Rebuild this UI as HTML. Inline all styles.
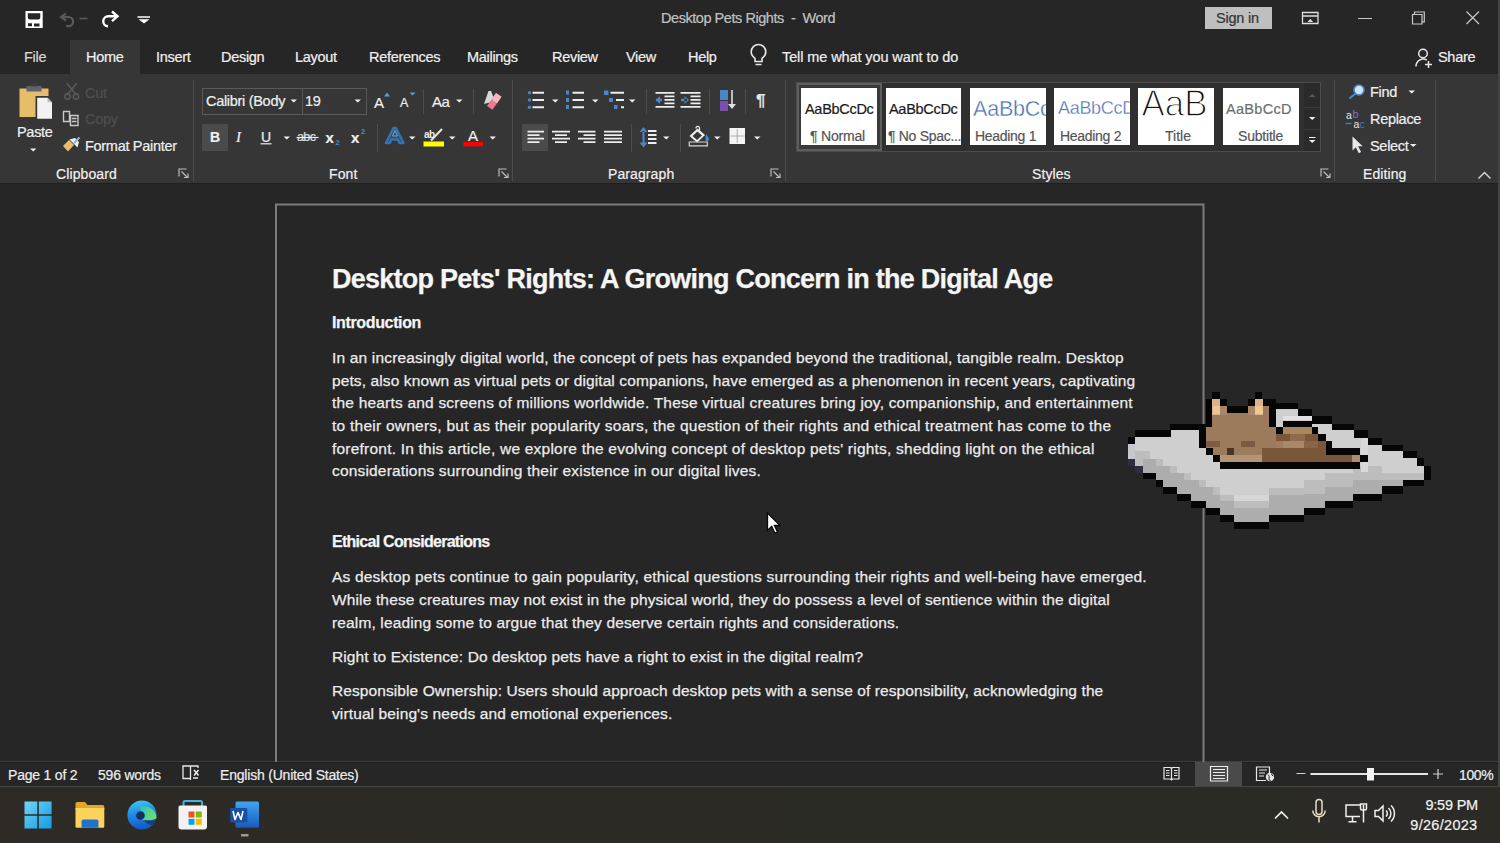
<!DOCTYPE html>
<html><head><meta charset="utf-8">
<style>
*{margin:0;padding:0;box-sizing:border-box}
html,body{width:1500px;height:843px;overflow:hidden;background:#262626}
body{position:relative;font-family:"Liberation Sans",sans-serif;color:#f2f2f2}
.a{position:absolute}
.t{position:absolute;white-space:nowrap;line-height:1;-webkit-text-stroke:0.2px currentColor}
#ov{position:absolute;left:0;top:0;width:1500px;height:843px}
.tab{font-size:14.5px;color:#f0f0f0;top:50px;letter-spacing:-0.3px}
.glab{font-size:14px;color:#f0f0f0;top:167px;letter-spacing:0.1px}
.rb{font-size:14.5px;color:#f0f0f0;letter-spacing:-0.3px}
.doc{position:absolute;left:332px;white-space:nowrap;color:#ececec;line-height:1;-webkit-text-stroke:0.25px #ececec}
.docb{font-weight:bold;color:#f6f6f6}
.st{font-size:14px;color:#ededed;top:768px;letter-spacing:-0.2px}
.sb{position:absolute;background:#fff}
</style></head><body>

<div class="a" style="left:0;top:0;width:1500px;height:74px;background:#262626"></div>
<div class="a" style="left:70px;top:40px;width:70px;height:34px;background:#363636"></div>
<div class="a" style="left:0;top:74px;width:1500px;height:109px;background:#363636"></div>
<div class="a" style="left:0;top:183px;width:1500px;height:1px;background:#1f1f1f"></div>

<!-- title bar -->
<div class="t" style="left:661px;top:11px;font-size:14.5px;color:#c2c2c2;letter-spacing:-0.45px">Desktop Pets Rights&nbsp; - &nbsp;Word</div>
<div class="a" style="left:1205px;top:7px;width:67px;height:22px;background:#bfbfbf"></div>
<div class="t" style="left:1216px;top:11px;font-size:14.5px;color:#333;letter-spacing:-0.2px">Sign in</div>

<!-- tabs -->
<div class="t tab" style="left:24px;color:#d6d6d6">File</div>
<div class="t tab" style="left:86px">Home</div>
<div class="t tab" style="left:156px">Insert</div>
<div class="t tab" style="left:221px">Design</div>
<div class="t tab" style="left:295px">Layout</div>
<div class="t tab" style="left:369px">References</div>
<div class="t tab" style="left:467px">Mailings</div>
<div class="t tab" style="left:552px">Review</div>
<div class="t tab" style="left:626px">View</div>
<div class="t tab" style="left:688px">Help</div>
<div class="t tab" style="left:782px;letter-spacing:-0.1px">Tell me what you want to do</div>
<div class="t tab" style="left:1438px">Share</div>

<!-- ribbon labels -->
<div class="t glab" style="left:56px">Clipboard</div>
<div class="t glab" style="left:329px">Font</div>
<div class="t glab" style="left:608px">Paragraph</div>
<div class="t glab" style="left:1032px">Styles</div>
<div class="t glab" style="left:1363px">Editing</div>

<div class="t rb" style="left:17px;top:125px">Paste</div>
<div class="t rb" style="left:85px;top:86px;color:#4f4f4f">Cut</div>
<div class="t rb" style="left:85px;top:112px;color:#4f4f4f">Copy</div>
<div class="t rb" style="left:85px;top:139px">Format Painter</div>

<!-- font boxes -->
<div class="a" style="left:202px;top:88px;width:165px;height:27px;border:1px solid #5a5a5a;background:#363636"></div>
<div class="a" style="left:302px;top:88px;width:1px;height:27px;background:#5a5a5a"></div>
<div class="t rb" style="left:206px;top:94px">Calibri (Body</div>
<div class="t rb" style="left:305px;top:94px">19</div>
<div class="a" style="left:202px;top:124px;width:26px;height:27px;background:#4b4b4b"></div>
<div class="a" style="left:522px;top:124px;width:26px;height:27px;background:#4b4b4b"></div>

<div class="t" style="left:374px;top:95px;font-size:15px;color:#f0f0f0">A</div>
<div class="t" style="left:400px;top:97px;font-size:12.5px;color:#f0f0f0">A</div>
<div class="t" style="left:432px;top:94px;font-size:15px;color:#f0f0f0;letter-spacing:-0.5px">Aa</div>
<div class="t" style="left:210px;top:130px;font-size:14px;font-weight:bold;color:#f0f0f0">B</div>
<div class="t" style="left:236px;top:130px;font-size:15px;font-style:italic;font-family:'Liberation Serif';color:#f0f0f0">I</div>
<div class="t" style="left:261px;top:130px;font-size:14px;color:#f0f0f0">U</div>
<div class="t" style="left:297px;top:131px;font-size:12.5px;color:#e0e0e0;letter-spacing:-0.6px">abc</div>
<div class="t" style="left:325.5px;top:130px;font-size:15px;font-weight:bold;color:#f0f0f0">x</div>
<div class="t" style="left:351px;top:130px;font-size:15px;font-weight:bold;color:#f0f0f0">x</div>
<div class="t" style="left:468px;top:128px;font-size:15px;color:#f0f0f0">A</div>
<div class="t" style="left:756px;top:92px;font-size:17px;font-weight:bold;color:#e8e8e8">&#182;</div>

<!-- styles gallery -->
<div class="a" style="left:796px;top:82px;width:525px;height:70px;background:#2f2f2f;border:1px solid #4c4c4c"></div>
<div class="a" style="left:797px;top:83px;width:85px;height:68px;border:2px solid #5e5e5e;background:#3a3a3a"></div>
<div class="a" style="left:801px;top:88px;width:76px;height:57px;background:#fff"></div>
<div class="a" style="left:886px;top:88px;width:75px;height:57px;background:#fff"></div>
<div class="a" style="left:970px;top:88px;width:76px;height:57px;background:#fff"></div>
<div class="a" style="left:1054px;top:88px;width:76px;height:57px;background:#fff"></div>
<div class="a" style="left:1138px;top:88px;width:76px;height:57px;background:#fff"></div>
<div class="a" style="left:1223px;top:88px;width:76px;height:57px;background:#fff"></div>
<div class="a" style="left:1304px;top:83px;width:16px;height:68px;background:#2a2a2a"></div>
<div class="a" style="left:1304px;top:107px;width:16px;height:1px;background:#3c3c3c"></div>
<div class="a" style="left:1304px;top:129px;width:16px;height:1px;background:#3c3c3c"></div>

<div class="a" style="left:801px;top:88px;width:76px;height:57px;overflow:hidden">
 <div class="t" style="left:4px;top:14px;font-size:14.5px;color:#1a1a1a;letter-spacing:-0.3px">AaBbCcDc</div>
 <div class="t" style="left:9px;top:41px;font-size:14px;color:#555;letter-spacing:-0.2px">&#182; Normal</div>
</div>
<div class="a" style="left:886px;top:88px;width:75px;height:57px;overflow:hidden">
 <div class="t" style="left:3px;top:14px;font-size:14.5px;color:#1a1a1a;letter-spacing:-0.3px">AaBbCcDc</div>
 <div class="t" style="left:2px;top:41px;font-size:14px;color:#555;letter-spacing:-0.3px">&#182; No Spac...</div>
</div>
<div class="a" style="left:970px;top:88px;width:76px;height:57px;overflow:hidden">
 <div class="t" style="left:5px;top:41px;font-size:14px;color:#555;letter-spacing:-0.3px">Heading 1</div>
</div>
<div class="a" style="left:1054px;top:88px;width:76px;height:57px;overflow:hidden">
 <div class="t" style="left:6px;top:41px;font-size:14px;color:#555;letter-spacing:-0.3px">Heading 2</div>
</div>
<div class="a" style="left:1138px;top:88px;width:76px;height:57px;overflow:hidden">
 <div class="t" style="left:27px;top:41px;font-size:14px;color:#555">Title</div>
</div>
<div class="a" style="left:1223px;top:88px;width:76px;height:57px;overflow:hidden">
 <div class="t" style="left:3px;top:14px;font-size:14.5px;color:#6e6e6e;letter-spacing:0.3px">AaBbCcD</div>
 <div class="t" style="left:15px;top:41px;font-size:14px;color:#555;letter-spacing:-0.2px">Subtitle</div>
</div>

<div class="t rb" style="left:1370px;top:85px">Find</div>
<div class="t rb" style="left:1370px;top:112px">Replace</div>
<div class="t rb" style="left:1370px;top:139px">Select</div>
<!-- document text -->
<div class="doc docb" style="top:265.9px;font-size:27px;letter-spacing:-0.751px">Desktop Pets&#39; Rights: A Growing Concern in the Digital Age</div>
<div class="doc docb" style="top:315.3px;font-size:16px;letter-spacing:-0.356px">Introduction</div>
<div class="doc" style="top:350.1px;font-size:15.5px;letter-spacing:0.174px">In an increasingly digital world, the concept of pets has expanded beyond the traditional, tangible realm. Desktop</div>
<div class="doc" style="top:372.7px;font-size:15.5px;letter-spacing:0.108px">pets, also known as virtual pets or digital companions, have emerged as a phenomenon in recent years, captivating</div>
<div class="doc" style="top:395.3px;font-size:15.5px;letter-spacing:0.200px">the hearts and screens of millions worldwide. These virtual creatures bring joy, companionship, and entertainment</div>
<div class="doc" style="top:417.9px;font-size:15.5px;letter-spacing:0.246px">to their owners, but as their popularity soars, the question of their rights and ethical treatment has come to the</div>
<div class="doc" style="top:440.5px;font-size:15.5px;letter-spacing:0.216px">forefront. In this article, we explore the evolving concept of desktop pets&#39; rights, shedding light on the ethical</div>
<div class="doc" style="top:463.1px;font-size:15.5px;letter-spacing:0.172px">considerations surrounding their existence in our digital lives.</div>
<div class="doc docb" style="top:533.6px;font-size:16px;letter-spacing:-0.723px">Ethical Considerations</div>
<div class="doc" style="top:569.4px;font-size:15.5px;letter-spacing:0.186px">As desktop pets continue to gain popularity, ethical questions surrounding their rights and well-being have emerged.</div>
<div class="doc" style="top:592.0px;font-size:15.5px;letter-spacing:0.142px">While these creatures may not exist in the physical world, they do possess a level of sentience within the digital</div>
<div class="doc" style="top:614.7px;font-size:15.5px;letter-spacing:0.143px">realm, leading some to argue that they deserve certain rights and considerations.</div>
<div class="doc" style="top:648.9px;font-size:15.5px;letter-spacing:0.105px">Right to Existence: Do desktop pets have a right to exist in the digital realm?</div>
<div class="doc" style="top:683.3px;font-size:15.5px;letter-spacing:0.093px">Responsible Ownership: Users should approach desktop pets with a sense of responsibility, acknowledging the</div>
<div class="doc" style="top:706.1px;font-size:15.5px;letter-spacing:0.119px">virtual being&#39;s needs and emotional experiences.</div>
<!-- status bar -->
<div class="a" style="left:0;top:761px;width:1500px;height:1px;background:#3f3f3f"></div>
<div class="a" style="left:0;top:762px;width:1500px;height:1px;background:#1e1e1e"></div>
<div class="a" style="left:1195px;top:762px;width:47px;height:25px;background:#4a4a4a"></div>
<div class="t st" style="left:8px">Page 1 of 2</div>
<div class="t st" style="left:98px">596 words</div>
<div class="t st" style="left:220px">English (United States)</div>
<div class="t st" style="left:1459px;letter-spacing:-0.4px">100%</div>
<div class="a" style="left:1498px;top:0;width:2px;height:786px;background:#434343"></div>
<!-- taskbar -->
<div class="a" style="left:0;top:786px;width:1500px;height:57px;background:linear-gradient(90deg,#2e2a25 0%,#2d2a25 25%,#2b2b26 55%,#2b2b26 85%,#2d2a26 100%)"></div>
<div class="a" style="left:0;top:786px;width:1500px;height:1px;background:#46453f"></div>
<div class="t" style="right:22px;top:798px;font-size:14.5px;color:#f2f2f2;letter-spacing:-0.2px">9:59 PM</div>
<div class="t" style="right:22.5px;top:818px;font-size:14.5px;color:#f2f2f2;letter-spacing:0.3px">9/26/2023</div>

<svg class="a" style="left:0;top:0" width="1500" height="843" viewBox="0 0 1500 843">
<defs>
<linearGradient id="win" x1="0" y1="0" x2="1" y2="1"><stop offset="0" stop-color="#6fd6f8"/><stop offset="1" stop-color="#1499e0"/></linearGradient>
<linearGradient id="edge1" x1="0.3" y1="0" x2="0.5" y2="1"><stop offset="0" stop-color="#3cc8f0"/><stop offset="0.45" stop-color="#1e8ae6"/><stop offset="1" stop-color="#1356c0"/></linearGradient>
<linearGradient id="edge2" x1="0" y1="0" x2="1" y2="0.6"><stop offset="0" stop-color="#2fc0c8"/><stop offset="1" stop-color="#6ee06a"/></linearGradient>
<linearGradient id="wd" x1="0" y1="0" x2="0" y2="1"><stop offset="0" stop-color="#41a5ee"/><stop offset="1" stop-color="#185abd"/></linearGradient>
</defs>
<g fill="none">
<!-- proofing book -->
<path stroke="#e8e8e8" stroke-width="1.3" d="M190.5 778.5v-12.5h-7.5v12.5h7.5 M190.5 766h7.5v2 M193 778h5 M190.5 778.5v1.5"/>
<path stroke="#f0f0f0" stroke-width="1.5" d="M194 770l4.5 5.5 M198.5 770l-4.5 5.5"/>
<!-- read mode -->
<path stroke="#e8e8e8" stroke-width="1.2" d="M1164 767.5h6.5l1 1 1-1h6.5v11.5h-6.5l-1 1-1-1h-6.5z M1171.5 768.5v11 M1166 770.5h3.5 M1166 773h3.5 M1166 775.5h3.5 M1174 770.5h3.5 M1174 773h3.5 M1174 775.5h3.5"/>
<!-- print layout -->
<path stroke="#ececec" stroke-width="1.2" d="M1210.5 766.5h17v14.5h-17z M1213 769.5h12 M1213 772.5h12 M1213 775.5h12 M1213 778.5h12"/>
<!-- web layout -->
<path stroke="#e8e8e8" stroke-width="1.2" d="M1266 780.5h-9.5v-13.5h13v6 M1259 770h8 M1259 773h6 M1259 776h5"/>
<circle cx="1270" cy="777" r="4.2" fill="#e8e8e8"/>
<path stroke="#262626" stroke-width="1" d="M1268 774.5q2 1.5 1 3.5t2 3 M1271.5 773.5q0 2 2 2.5"/>
<!-- zoom slider -->
<path stroke="#d0d0d0" stroke-width="1.2" d="M1296.5 773.5h9 M1433 774h10 M1438 769v10"/>
<path stroke="#e6e6e6" stroke-width="1.8" d="M1310.5 774h117.5"/>
<path fill="#f4f4f4" d="M1367 768h7v12.5h-7z"/>

<!-- windows -->
<path fill="url(#win)" d="M24.5 801.5h12.8v12.8h-12.8z M38.8 801.5h12.8v12.8h-12.8z M24.5 815.8h12.8v12.8h-12.8z M38.8 815.8h12.8v12.8h-12.8z"/>
<!-- explorer -->
<path fill="#e4a52a" d="M75.5 803.5q0-1.5 1.5-1.5h8l2.5 3h15.3q1.5 0 1.5 1.5v3h-28.8z"/>
<path fill="#fcd35c" d="M75.5 808h28.8v18.5q0 1.2-1.2 1.2h-26.4q-1.2 0-1.2-1.2z"/>
<path fill="#1f73c9" d="M81.5 821.5q0-2 2-2h13q2 0 2 2v6.2h-17z"/>
<!-- edge -->
<circle cx="142" cy="815" r="14.6" fill="url(#edge1)"/>
<path fill="url(#edge2)" d="M140 806.5c8 -1 16 2.5 16.6 11.5c-2 2-6 2.6-12 2.3c-3-0.2-4-2.5-3.6-5z"/>
<circle cx="140.5" cy="815.5" r="4.3" fill="#143060"/>
<path fill="#1a3f7e" d="M144 820.3c4 0.3 9 0.4 12.6-1.6c-0.6 2.5-1.8 4.8-3.4 6.6c-3 0.3-6.5-1.2-9.2-5z"/>
<!-- store -->
<path stroke="#3fb5e6" stroke-width="2" d="M183.5 807v-4.5q0-1.5 1.5-1.5h15.5q1.5 0 1.5 1.5v4.5"/>
<path fill="#f3f3f3" d="M178.5 807q0-1.5 1.5-1.5h25.5q1.5 0 1.5 1.5v19.5q0 3-3 3h-22.5q-3 0-3-3z"/>
<path fill="#f25022" d="M188.5 811.5h6v6h-6z"/>
<path fill="#7fba00" d="M195.8 811.5h6v6h-6z"/>
<path fill="#00a4ef" d="M188.5 818.8h6v6h-6z"/>
<path fill="#ffb900" d="M195.8 818.8h6v6h-6z"/>
<!-- word -->
<path fill="url(#wd)" d="M237 801.5h20.5q1.5 0 1.5 1.5v23.2q0 1.5-1.5 1.5h-20.5q-1.5 0-1.5-1.5v-23.2q0-1.5 1.5-1.5z"/>
<path fill="#1a4fa8" d="M231.5 808h14.5q1.3 0 1.3 1.3v12q0 1.3-1.3 1.3h-14.5q-1.3 0-1.3-1.3v-12q0-1.3 1.3-1.3z"/>
<path stroke="#fff" stroke-width="1.6" stroke-linejoin="round" d="M233 811l2 8.5 3-7 3 7 2-8.5"/>
<path fill="#9a9a96" d="M241 834h7.5v2.5h-7.5z"/>
<!-- tray -->
<path stroke="#f0f0f0" stroke-width="1.7" d="M1275 818.5l6.5-6.5 6.5 6.5"/>
<path stroke="#e9dcc6" stroke-width="1.5" d="M1316 802.5a3 3 0 0 1 6 0v9a3 3 0 0 1-6 0z M1312.8 810.5a6.2 6.2 0 0 0 12.4 0 M1319 817v5.5"/>
<path stroke="#f0f0f0" stroke-width="1.5" d="M1360 816.5h-14v-11.5h14.5 M1352.5 816.5v5 M1348.5 821.8h8 M1363.5 805v17.5 M1360.5 804v4.5q0 1.5 1.5 1.5h3q1.5 0 1.5-1.5v-4.5z"/>
<path stroke="#f0f0f0" stroke-width="1.5" d="M1375 810.5h3.5l4.5-4.5v15l-4.5-4.5h-3.5z M1386 810.5a4 4 0 0 1 0 6 M1388.5 808a7.5 7.5 0 0 1 0 11 M1391 805.5a11 11 0 0 1 0 16"/>
</g>
</svg>
<svg id="ov" width="1500" height="843" viewBox="0 0 1500 843">
<g fill="none" stroke-linecap="butt">
<!-- save -->
<path fill="#fff" fill-rule="evenodd" d="M25.5 11h17.2v17H25.5z M27.8 13.2h12.5v4.3q0 2-2 2h-8.5q-2 0-2-2z M28 23.3h4v3h-4z M34 23.6h5.5v2.8h-5.5z"/>
<!-- undo (disabled) -->
<path stroke="#595959" stroke-width="2.2" d="M66 13.5l-5 3.5 5 3.5 M61 17h7.5a4.6 4.6 0 0 1 0 9.2h-2.5"/>
<path stroke="#595959" stroke-width="1.6" d="M79.5 18.5h8"/>
<!-- redo -->
<path stroke="#fff" stroke-width="2.4" stroke-linejoin="miter" d="M112 11.5l5.5 4.8-5.5 4.8 M117 16.3h-8.5a5 5 0 0 0-0.5 10"/>
<!-- qat -->
<path stroke="#fff" stroke-width="1.5" d="M137.5 17h12.5"/>
<path fill="#fff" d="M138.5 19.2h11l-5.5 4.3z"/>
<!-- ribbon display opts -->
<path stroke="#dedede" stroke-width="1.3" d="M1302.5 12.5h15.5v11h-15.5z M1302.5 16h15.5"/>
<path fill="#dedede" d="M1307.5 22l2.8-3.2 2.8 3.2z"/>
<!-- minimize / restore / close -->
<path stroke="#c8c8c8" stroke-width="1.2" d="M1358 18.5h14 M1412.5 14.5h9.5v9.5h-9.5z M1414.5 14.5v-2.5h9.8v9.8h-2.3 M1466.5 11.5l12.5 12.5 M1479 11.5l-12.5 12.5"/>
<!-- lightbulb -->
<path stroke="#e8e8e8" stroke-width="1.6" d="M755 61.5v-3.2c-2.5-1.8-3.8-4-3.8-6.5a7.3 7.3 0 0 1 14.6 0c0 2.5-1.3 4.7-3.8 6.5v3.2z M755.5 64.5h6"/>
<!-- share person -->
<circle cx="1423" cy="53.5" r="4.3" stroke="#e8e8e8" stroke-width="1.5"/><path stroke="#e8e8e8" stroke-width="1.5" d="M1416 66.5a7.3 7.3 0 0 1 10.8-6.5 M1428.5 61v7 M1425 64.5h7"/>

<!-- group separators -->
<path stroke="#4c4c4c" stroke-width="1" d="M193.5 80v101 M512.5 80v101 M785.5 80v101 M1334.5 80v101 M1435.5 80v101 M423.5 89v25 M473.5 89v25 M646.5 89v25 M709.5 89v25 M745.5 89v25 M377.5 124v28 M631.5 124v28 M680.5 124v28"/>
<!-- dialog launchers -->
<g stroke="#bdbdbd" stroke-width="1.2">
<path d="M179 176.5v-7.5h7.5 M181.5 171.5l6 6 M184 177.5h4v-4"/>
<path d="M499 176.5v-7.5h7.5 M501.5 171.5l6 6 M504 177.5h4v-4"/>
<path d="M771 176.5v-7.5h7.5 M773.5 171.5l6 6 M776 177.5h4v-4"/>
<path d="M1321 176.5v-7.5h7.5 M1323.5 171.5l6 6 M1326 177.5h4v-4"/>
</g>
<!-- collapse ribbon -->
<path stroke="#d0d0d0" stroke-width="1.5" d="M1478.5 178.5l6-6 6 6"/>

<!-- dropdown arrows -->
<g fill="#f0f0f0">
<path d="M30 148.5h6.5l-3.25 3z"/>
<path d="M290.5 99.5h6.5l-3.25 3z"/>
<path d="M354.5 99.5h6.5l-3.25 3z"/>
<path d="M456 99.5h6.5l-3.25 3z"/>
<path d="M283.5 136.5h6.5l-3.25 3z"/>
<path d="M409 136.5h6.5l-3.25 3z"/>
<path d="M449 136.5h6.5l-3.25 3z"/>
<path d="M489.5 136.5h6.5l-3.25 3z"/>
<path d="M552 99.5h6.5l-3.25 3z"/>
<path d="M592 99.5h6.5l-3.25 3z"/>
<path d="M629 99.5h6.5l-3.25 3z"/>
<path d="M663 136.5h6.5l-3.25 3z"/>
<path d="M714 136.5h6.5l-3.25 3z"/>
<path d="M754 136.5h6.5l-3.25 3z"/>
<path d="M1408.5 90.5h6.5l-3.25 3z"/>
<path d="M1410 144h6.5l-3.25 3z"/>
<path d="M1309 117h6.5l-3.25 3z"/>
<path d="M1309 140h6.5l-3.25 3z"/>
</g>
<path stroke="#f0f0f0" stroke-width="1" d="M1309 137.5h6.5"/>
<path fill="#5a5a5a" d="M1309 97h6.5l-3.25-3z"/>

<!-- paste -->
<path fill="#e6bd69" d="M19.5 88.5h29v28.5h-29z"/>
<path fill="#5d6670" d="M26.5 86h15v5.5h-15z"/>
<path fill="#3c3c3c" d="M31 83.5h6v3h-6z"/>
<path fill="#363636" d="M35.5 96h17.5v23h-17.5z"/>
<path fill="#f2f2f2" d="M37.2 97.8h10.3l4.5 4.5v16.5h-14.8z"/>
<path fill="#bdbdbd" d="M47.5 97.8v4.5h4.5z"/>
<!-- cut -->
<g stroke="#5a5a5a" stroke-width="1.5">
<path d="M67 83.5l9.5 11.5 M76.5 83.5l-9.5 11.5"/>
<circle cx="67.5" cy="96.5" r="2.7"/>
<circle cx="76" cy="96.5" r="2.7"/>
</g>
<!-- copy -->
<g stroke="#c8c8c8" stroke-width="1.4">
<path d="M63.5 111.5h6v10h-6z"/>
<path fill="#363636" d="M70.5 115.5h7.5v10h-7.5z"/>
<path d="M72 118.5h4.5 M72 121.5h4.5"/>
</g>
<!-- format painter -->
<path fill="#e6bd69" d="M63 146l6-6 5 5-6 6.5z"/>
<path fill="#f0f0f0" d="M69.5 139.5l5.5-1.5 4 4-1.5 5.5z"/>
<path stroke="#8fb4dd" stroke-width="2.2" d="M74 143l5.5-5.5"/>

<!-- grow / shrink blue triangles -->
<path fill="#5b9bd5" d="M384 96.5l3-4 3 4z"/>
<path fill="#5b9bd5" d="M409.5 92.5h6l-3 3z"/>
<!-- clear formatting -->
<path fill="#d8d8d8" d="M484 104l4.5-13h2.5l4 10"/>
<path fill="#e97990" d="M487 106l9-13 5.5 3.8-9 13z"/>
<path fill="#f5b6c2" d="M491.5 99.5l4.5-6.5 5.5 3.8-4.5 6.5z"/>
<!-- B/I/U extras -->
<path stroke="#f0f0f0" stroke-width="1.2" d="M260.5 143.8h11"/>
<path stroke="#f0f0f0" stroke-width="1.2" d="M296.5 137.5h22"/>
<text x="335.5" y="145" font-family="Liberation Sans" font-size="7.5" font-weight="bold" fill="#4a86c8">2</text>
<text x="361" y="134" font-family="Liberation Sans" font-size="7.5" font-weight="bold" fill="#4a86c8">2</text>
<!-- text effects A -->
<path stroke="#2e75b6" stroke-width="2.5" fill="#404a58" stroke-linejoin="round" d="M386 143l7.5-15h2.5l7.5 15h-4l-1.6-3.5h-6.5l-1.6 3.5z"/>
<path stroke="#6ea6e0" stroke-width="1" d="M392.5 136h5l-2.5-5.5z"/>
<!-- highlighter -->
<text x="424" y="137.5" font-family="Liberation Sans" font-size="10" font-weight="bold" fill="#ededed" letter-spacing="-0.5">ab</text>
<path stroke="#e6e6e6" stroke-width="2" d="M431 140.5l11-11.5"/>
<path fill="#ffff00" d="M423.5 141.5h20.5v5h-20.5z"/>
<!-- font color bar -->
<path fill="#ff0000" d="M463.5 142h19.5v4.3h-19.5z"/>

<!-- bullets -->
<g fill="#4a86c8">
<circle cx="529.5" cy="92.8" r="1.7"/><circle cx="529.5" cy="100" r="1.7"/><circle cx="529.5" cy="107.2" r="1.7"/>
<path d="M566 90.5h3v4h-3z M566 98h3v4h-3z M566 105h3v4h-3z"/>
<path d="M604 90.5h4.5v4.5h-4.5z M609 98h4v4h-4z M614 105h3.5v4h-3.5z"/>
</g>
<g stroke="#ededed" stroke-width="2">
<path d="M532.5 92.8h11.5 M532.5 100h11.5 M532.5 107.2h11.5"/>
<path d="M572.5 92.8h11.5 M572.5 100h11.5 M572.5 107.2h11.5"/>
<path d="M610.5 92.8h13.5 M616 100h8 M621 107.2h3"/>
</g>
<!-- indents -->
<g stroke="#ededed" stroke-width="1.8">
<path d="M655.5 92.8h19 M664.5 96.3h10 M664.5 99.8h10 M664.5 103.3h10 M655.5 106.8h19"/>
<path d="M680.5 92.8h20 M690.5 96.3h10 M690.5 99.8h10 M690.5 103.3h10 M680.5 106.8h20"/>
</g>
<path fill="#4a86c8" d="M655.5 100l4.5-4v8z M656 98.8h6v2.4h-6z M689 100l-4.5-4v8z M681 98.8h6v2.4h-6z"/>
<!-- sort -->
<path fill="#4a86c8" d="M720 90h8v10h-8z"/>
<path fill="#7b4fb0" d="M720 101h8v10h-8z"/>
<path stroke="#e0e0e0" stroke-width="1.6" d="M732 90v17"/>
<path fill="#e0e0e0" d="M728 104h8l-4 5z"/>
<!-- align lines -->
<g stroke="#ededed" stroke-width="1.8">
<path d="M527.5 131.7h16.5 M527.5 135.2h12 M527.5 138.7h16.5 M527.5 142.2h12"/>
<path d="M552 131.7h18 M555 135.2h12 M552 138.7h18 M555 142.2h12"/>
<path d="M578 131.7h17.5 M583.5 135.2h12 M578 138.7h17.5 M583.5 142.2h12"/>
<path d="M604 131.7h18 M604 135.2h18 M604 138.7h18 M604 142.2h18"/>
<path d="M648 131h8.5 M648 135h8.5 M648 139h8.5 M648 143h8.5"/>
</g>
<!-- line spacing arrows -->
<path fill="#4a86c8" d="M643.5 127l-4 5h8z M643.5 147.5l-4-5h8z M642.5 131h2v12h-2z"/>
<!-- shading -->
<path fill="#f0f0f0" d="M697.5 128.5l-8 7.5 7.5 6.5 8-7.5z"/>
<path fill="#363636" d="M697.5 131.5l-5 4.5 4.5 4 5-4.5z"/>
<path stroke="#f0f0f0" stroke-width="1.2" d="M696 128.5c0-3 3.5-3 3.5 0v3"/>
<path fill="#4a86c8" d="M706 134q3 3.5 3 5.5a1.8 1.8 0 0 1-3.6 0q0-2 0.6-5.5z"/>
<path stroke="#d8d8d8" stroke-width="1.2" d="M689.3 142h18v3.8h-18z"/>
<!-- borders -->
<path fill="#f5f5f5" d="M729.5 128h15.5v16h-15.5z"/>
<path stroke="#9a9a9a" stroke-width="0.8" d="M737.25 129v14 M730.5 136h14"/>

<!-- find -->
<circle cx="1359" cy="90" r="5" fill="#cfe4f8" stroke="#4a86c8" stroke-width="1.6"/>
<path stroke="#4a86c8" stroke-width="2.2" d="M1355.5 93.5l-6 5"/>
<!-- replace -->
<g font-family="Liberation Sans" font-size="10.5">
<text x="1346" y="119" fill="#e8e8e8">a</text>
<text x="1352.5" y="118" fill="#8f6fc4">b</text>
<text x="1353.5" y="127.5" fill="#e8e8e8">a</text>
<text x="1359.5" y="127.5" fill="#3d7cc0">c</text>
</g>
<path stroke="#3d7cc0" stroke-width="1.4" d="M1345.5 123.5h6"/>
<!-- select cursor -->
<path fill="#e8e8e8" d="M1352.5 136.5v14l3.3-3.3 3 6 2.3-1.1-3-5.9h4.6z"/>

<!-- style gallery svg text -->
<defs><clipPath id="c1"><rect x="970" y="88" width="76" height="57"/></clipPath><clipPath id="c2"><rect x="1054" y="88" width="76" height="57"/></clipPath><clipPath id="c3"><rect x="1138" y="88" width="76" height="57"/></clipPath></defs>
<text clip-path="url(#c1)" x="973" y="115.5" font-family="Liberation Sans" font-size="21.5" fill="#4a70b4" stroke="#fff" stroke-width="0.35" letter-spacing="-0.2">AaBbCc</text>
<text clip-path="url(#c2)" x="1058" y="113.6" font-family="Liberation Sans" font-size="18" fill="#4f74b6" stroke="#fff" stroke-width="0.3" letter-spacing="-0.3">AaBbCcD</text>
<text clip-path="url(#c3)" x="1141.5" y="115.5" font-family="Liberation Sans" font-size="37" fill="#111" stroke="#fff" stroke-width="1.3" textLength="66" lengthAdjust="spacingAndGlyphs">AaB</text>
<!-- page border -->
<path stroke="#7c7c7c" stroke-width="2" d="M276 762V204.5h927.5V762"/>
<!-- mouse cursor -->
<path fill="#fff" stroke="#0a0a0a" stroke-width="1.3" stroke-linejoin="miter" d="M767.5 513v17.5l4.2-4.2 3.2 6.9 2.6-1.2-3.1-6.5h5.6z"/>
</g>
</svg>
<!-- pet -->
<svg class="a" style="left:0;top:0" width="1500" height="843" viewBox="0 0 1500 843" shape-rendering="crispEdges">
<path fill="#cfcfcf" d="M1135.4 444.2 L1135.4 437.1 L1170.5 437.1 L1170.5 430.4 L1199.0 430.4 L1199.0 424.0 L1212.0 424.0 L1269.4 424.0 L1275.6 409.2 L1297.5 409.2 L1297.5 416.3 L1311.7 416.3 L1311.7 423.5 L1332.1 423.5 L1332.1 430.1 L1353.5 430.1 L1353.5 437.4 L1368.0 437.4 L1368.0 444.7 L1382.2 444.7 L1382.2 451.3 L1402.6 451.3 L1402.6 458.0 L1416.9 458.0 L1416.9 465.5 L1424.0 465.5 L1424.0 479.8 L1402.6 479.8 L1402.6 486.4 L1382.0 486.4 L1382.0 494.0 L1353.3 494.0 L1353.3 501.3 L1325.3 501.3 L1325.3 508.0 L1304.0 508.0 L1304.0 515.3 L1269.3 515.3 L1269.3 522.0 L1234.0 522.0 L1234.0 515.3 L1220.0 515.3 L1220.0 508.0 L1206.0 508.0 L1206.0 500.7 L1191.4 500.7 L1191.4 494.0 L1177.2 494.0 L1177.2 487.0 L1163.4 487.0 L1163.4 479.8 L1156.3 479.8 L1156.3 473.2 L1142.6 473.2 L1142.6 465.6 L1135.4 465.6 z"/>
<path fill="#bdbdbd" d="M1135.4 451.3 L1150.0 451.3 L1150.0 458.5 L1163.4 458.5 L1163.4 465.6 L1177.2 465.6 L1177.2 472.7 L1191.4 472.7 L1191.4 479.8 L1206.0 479.8 L1206.0 487.0 L1220.0 487.0 L1220.0 494.7 L1234.0 494.7 L1234.0 501.3 L1269.3 501.3 L1269.3 488.0 L1304.0 488.0 L1304.0 480.0 L1325.3 480.0 L1325.3 473.0 L1353.3 473.0 L1353.3 466.0 L1382.0 466.0 L1382.0 472.7 L1424.0 472.7 L1424.0 479.8 L1402.6 479.8 L1402.6 486.4 L1382.0 486.4 L1382.0 494.0 L1353.3 494.0 L1353.3 501.3 L1325.3 501.3 L1325.3 508.0 L1304.0 508.0 L1304.0 515.3 L1269.3 515.3 L1269.3 522.0 L1234.0 522.0 L1234.0 515.3 L1220.0 515.3 L1220.0 508.0 L1206.0 508.0 L1206.0 500.7 L1191.4 500.7 L1191.4 494.0 L1177.2 494.0 L1177.2 487.0 L1163.4 487.0 L1163.4 479.8 L1156.3 479.8 L1156.3 473.2 L1142.6 473.2 L1142.6 465.6 L1135.4 465.6 z"/>
<path fill="#adadad" d="M1142.6 465.6 L1142.6 458.5 L1156.3 458.5 L1156.3 465.6 L1170.0 465.6 L1170.0 472.7 L1184.0 472.7 L1184.0 479.8 L1199.0 479.8 L1199.0 487.0 L1213.0 487.0 L1213.0 494.7 L1220.0 494.7 L1220.0 501.3 L1234.0 501.3 L1234.0 508.0 L1269.3 508.0 L1269.3 494.7 L1304.0 494.7 L1304.0 494.0 L1325.3 494.0 L1325.3 487.0 L1353.3 487.0 L1353.3 480.0 L1382.0 480.0 L1382.0 479.8 L1402.6 479.8 L1402.6 486.4 L1382.0 486.4 L1382.0 494.0 L1353.3 494.0 L1353.3 501.3 L1325.3 501.3 L1325.3 508.0 L1304.0 508.0 L1304.0 515.3 L1269.3 515.3 L1269.3 522.0 L1234.0 522.0 L1234.0 515.3 L1220.0 515.3 L1220.0 508.0 L1206.0 508.0 L1206.0 500.7 L1191.4 500.7 L1191.4 494.0 L1177.2 494.0 L1177.2 487.0 L1163.4 487.0 L1163.4 479.8 L1156.3 479.8 L1156.3 473.2 L1142.6 473.2 z"/>
<rect x="1128.3" y="444.2" width="7.1" height="14.3" fill="#c6c6ce"/>
<rect x="1128.3" y="458.5" width="7.1" height="7.1" fill="#2e2e40"/>
<rect x="1135.4" y="465.6" width="7.2" height="7.1" fill="#2e2e40"/>
<rect x="1128.3" y="437.4" width="7.1" height="6.8" fill="#060606"/>
<rect x="1135.4" y="430.2" width="35.1" height="7.0" fill="#060606"/>
<rect x="1170.4" y="424.0" width="28.6" height="6.4" fill="#060606"/>
<rect x="1275.6" y="403.0" width="21.9" height="6.2" fill="#060606"/>
<rect x="1297.5" y="409.2" width="14.2" height="7.1" fill="#060606"/>
<rect x="1311.7" y="416.3" width="20.4" height="7.2" fill="#060606"/>
<rect x="1332.1" y="423.5" width="21.4" height="6.6" fill="#060606"/>
<rect x="1353.5" y="430.3" width="14.5" height="7.2" fill="#060606"/>
<rect x="1368.0" y="437.7" width="14.2" height="7.0" fill="#060606"/>
<rect x="1382.2" y="444.7" width="20.4" height="6.6" fill="#060606"/>
<rect x="1402.6" y="451.3" width="14.3" height="6.7" fill="#060606"/>
<rect x="1416.9" y="458.0" width="7.1" height="7.5" fill="#060606"/>
<rect x="1424.0" y="465.5" width="6.6" height="14.3" fill="#060606"/>
<rect x="1402.6" y="479.8" width="21.4" height="6.6" fill="#060606"/>
<rect x="1381.7" y="486.4" width="20.9" height="7.1" fill="#060606"/>
<rect x="1353.3" y="494.0" width="28.7" height="6.7" fill="#060606"/>
<rect x="1325.3" y="501.3" width="28.0" height="6.7" fill="#060606"/>
<rect x="1304.0" y="508.0" width="21.3" height="6.7" fill="#060606"/>
<rect x="1269.3" y="515.3" width="34.7" height="6.7" fill="#060606"/>
<rect x="1234.0" y="522.0" width="35.3" height="6.7" fill="#060606"/>
<rect x="1220.0" y="515.3" width="14.0" height="6.7" fill="#060606"/>
<rect x="1206.0" y="508.0" width="14.0" height="6.7" fill="#060606"/>
<rect x="1191.4" y="500.7" width="14.6" height="7.1" fill="#060606"/>
<rect x="1177.2" y="494.0" width="14.2" height="6.7" fill="#060606"/>
<rect x="1163.4" y="487.0" width="13.8" height="6.6" fill="#060606"/>
<rect x="1156.3" y="479.8" width="7.1" height="6.7" fill="#060606"/>
<rect x="1142.6" y="473.2" width="13.7" height="6.1" fill="#060606"/>
<rect x="1283.3" y="416.3" width="28.4" height="4.1" fill="#e2e2e2"/>
<rect x="1361.0" y="438.0" width="6.5" height="34.0" fill="#d9d9d9"/>
<rect x="1234.0" y="494.7" width="35.3" height="6.6" fill="#d6d6d6"/>
<path fill="#7b573a" d="M1283.3 426.8 L1311.7 426.8 L1311.7 433.9 L1318.4 433.9 L1318.4 441.0 L1325.5 441.0 L1325.5 455.2 L1360.1 455.2 L1360.1 462.4 L1220.0 462.4 L1220.0 455.2 L1262.0 455.2 L1262.0 448.2 L1270.0 448.2 L1270.0 433.2 L1283.3 433.2 z"/>
<rect x="1283.3" y="426.8" width="28.4" height="7.1" fill="#a9875f"/>
<rect x="1290.0" y="433.9" width="15.0" height="7.1" fill="#8f6a4c"/>
<rect x="1283.3" y="441.0" width="20.7" height="7.1" fill="#a9886a"/>
<rect x="1304.0" y="441.0" width="14.4" height="7.1" fill="#8a6548"/>
<rect x="1276.0" y="441.0" width="7.3" height="7.1" fill="#a07d5f"/>
<rect x="1352.0" y="455.2" width="8.1" height="7.2" fill="#b08a6c"/>
<rect x="1283.3" y="420.6" width="28.4" height="6.2" fill="#060606"/>
<rect x="1276.2" y="427.3" width="7.1" height="6.6" fill="#060606"/>
<rect x="1311.7" y="427.3" width="6.7" height="6.6" fill="#060606"/>
<rect x="1318.4" y="433.9" width="7.1" height="7.1" fill="#060606"/>
<rect x="1325.5" y="441.0" width="6.6" height="7.1" fill="#060606"/>
<rect x="1325.5" y="448.1" width="34.6" height="7.1" fill="#060606"/>
<rect x="1360.1" y="455.2" width="7.6" height="7.2" fill="#060606"/>
<rect x="1220.0" y="462.4" width="140.1" height="6.6" fill="#060606"/>
<path fill="#9c7b5c" d="M1212.4 406.4 L1269.4 406.4 L1269.4 427.4 L1275.6 427.4 L1275.6 448.2 L1262.3 448.2 L1262.3 455.2 L1212.5 455.2 L1212.5 448.2 L1205.8 448.2 L1205.8 427.4 L1212.4 427.4 z"/>
<rect x="1212.4" y="399.2" width="7.8" height="15.6" fill="#d9b48c"/>
<rect x="1213.0" y="406.4" width="7.2" height="7.2" fill="#f0c592"/>
<rect x="1254.7" y="399.2" width="8.1" height="15.6" fill="#d9b48c"/>
<rect x="1255.0" y="406.4" width="7.8" height="7.2" fill="#f0c592"/>
<rect x="1220.2" y="406.4" width="6.9" height="8.6" fill="#a88766"/>
<rect x="1247.8" y="406.4" width="6.9" height="8.6" fill="#a88766"/>
<rect x="1205.8" y="440.7" width="13.7" height="6.7" fill="#7e5d43"/>
<rect x="1240.7" y="440.7" width="14.1" height="6.7" fill="#7a5a40"/>
<rect x="1226.6" y="448.2" width="7.0" height="7.0" fill="#4b3421"/>
<rect x="1220.0" y="455.2" width="42.3" height="7.2" fill="#b39474"/>
<rect x="1262.3" y="448.2" width="7.7" height="7.0" fill="#7b573a"/>
<rect x="1212.4" y="392.3" width="7.8" height="6.9" fill="#060606"/>
<rect x="1254.7" y="392.3" width="7.5" height="6.9" fill="#060606"/>
<rect x="1205.8" y="399.2" width="6.6" height="28.2" fill="#060606"/>
<rect x="1220.2" y="399.2" width="6.9" height="7.2" fill="#060606"/>
<rect x="1227.1" y="406.4" width="20.7" height="6.9" fill="#060606"/>
<rect x="1247.8" y="399.2" width="6.9" height="7.2" fill="#060606"/>
<rect x="1262.8" y="399.2" width="12.6" height="7.2" fill="#060606"/>
<rect x="1269.4" y="399.2" width="6.2" height="28.2" fill="#060606"/>
<rect x="1199.0" y="424.0" width="6.8" height="23.7" fill="#060606"/>
<rect x="1205.8" y="448.2" width="6.7" height="6.6" fill="#060606"/>
<rect x="1212.9" y="455.2" width="7.1" height="6.7" fill="#060606"/>
<rect x="1275.6" y="427.4" width="7.0" height="5.8" fill="#060606"/>
</svg>
</body></html>
